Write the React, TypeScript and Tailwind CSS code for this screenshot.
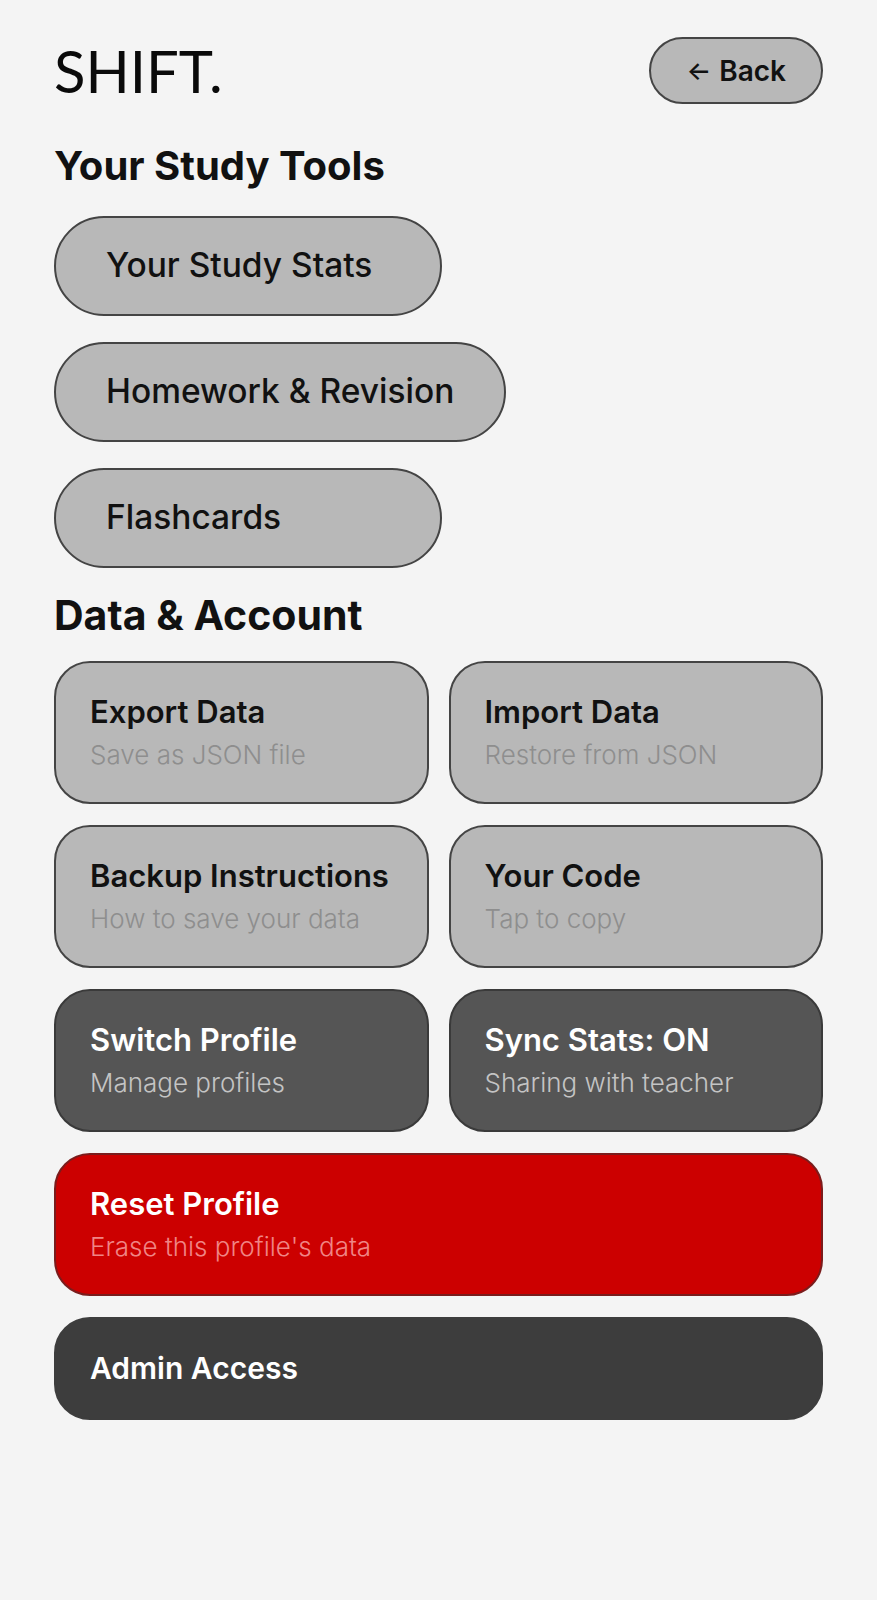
import React from "react";

type Card = {
  title: string;
  sub?: string;
  variant: "light" | "dark" | "red" | "black";
};

const gridCards: Card[] = [
  { title: "Export Data", sub: "Save as JSON file", variant: "light" },
  { title: "Import Data", sub: "Restore from JSON", variant: "light" },
  { title: "Backup Instructions", sub: "How to save your data", variant: "light" },
  { title: "Your Code", sub: "Tap to copy", variant: "light" },
  { title: "Switch Profile", sub: "Manage profiles", variant: "dark" },
  { title: "Sync Stats: ON", sub: "Sharing with teacher", variant: "dark" },
];

function ActionCard({ title, sub, variant }: Card) {
  const box =
    variant === "light"
      ? "bg-[#b8b8b8] border-[#444444]"
      : variant === "dark"
      ? "bg-[#555555] border-[#3a3a3a]"
      : variant === "red"
      ? "bg-[#cc0000] border-[#7a1c1c]"
      : "bg-[#3d3d3d] border-[#3d3d3d]";
  const titleColor = variant === "light" ? "text-[#111111]" : "text-white";
  const subColor =
    variant === "light"
      ? "text-[#8e8e8e]"
      : variant === "dark"
      ? "text-[#c4c4c4]"
      : "text-[#f08585]";
  const height = sub ? "h-[143px]" : "h-[103px]";
  const titleSize = sub ? "text-[31px]" : "text-[30px]";
  return (
    <button
      type="button"
      className={`flex w-full flex-col items-start justify-center rounded-[36px] border-2 pl-[34px] pr-4 pb-[2px] text-left ${height} ${box}`}
    >
      <span className={`${titleSize} font-semibold leading-none whitespace-nowrap ${titleColor}`}>
        {title}
      </span>
      {sub && (
        <span className={`mt-[15px] text-[26px] font-light leading-none whitespace-nowrap ${subColor}`}>
          {sub}
        </span>
      )}
    </button>
  );
}

function Pill({ label }: { label: string }) {
  return (
    <button
      type="button"
      className="flex h-[100px] min-w-[388px] items-center self-start rounded-full border-2 border-[#444444] bg-[#b8b8b8] px-[50px] text-[33.5px] font-medium leading-none text-[#111111]"
    >
      {label}
    </button>
  );
}

export default function App() {
  return (
    <div
      className="min-h-screen bg-[#f4f4f4] px-[54px] pt-[37px] pb-16"
      style={{ fontFamily: "Inter, 'Noto Sans', sans-serif" }}
    >
      <header className="flex items-center justify-between">
        <h1
          className="text-[58px] font-normal leading-none text-[#0a0a0a]"
          style={{ fontFamily: "Lato, Inter, sans-serif" }}
        >
          SHIFT.
        </h1>
        <button
          type="button"
          className="flex h-[67px] items-center rounded-full border-2 border-[#444444] bg-[#b8b8b8] px-[35px] text-[28px] font-semibold leading-none text-[#111111]"
        >
          <span className="mr-[8px] text-[26px] font-medium">←</span>
          Back
        </button>
      </header>

      <h2 className="mt-[42px] text-[40px] font-bold leading-none text-[#111111]">
        Your Study Tools
      </h2>

      <div className="mt-[30px] flex flex-col gap-[26px]">
        <Pill label="Your Study Stats" />
        <Pill label="Homework & Revision" />
        <Pill label="Flashcards" />
      </div>

      <h2 className="mt-[27px] text-[41px] font-bold leading-none text-[#111111]">
        Data &amp; Account
      </h2>

      <div className="mt-[25px] flex flex-col gap-[21px]">
        <div className="grid grid-cols-2 gap-x-[20px] gap-y-[21px]">
          {gridCards.map((c) => (
            <ActionCard key={c.title} {...c} />
          ))}
        </div>
        <ActionCard title="Reset Profile" sub="Erase this profile's data" variant="red" />
        <ActionCard title="Admin Access" variant="black" />
      </div>
    </div>
  );
}
